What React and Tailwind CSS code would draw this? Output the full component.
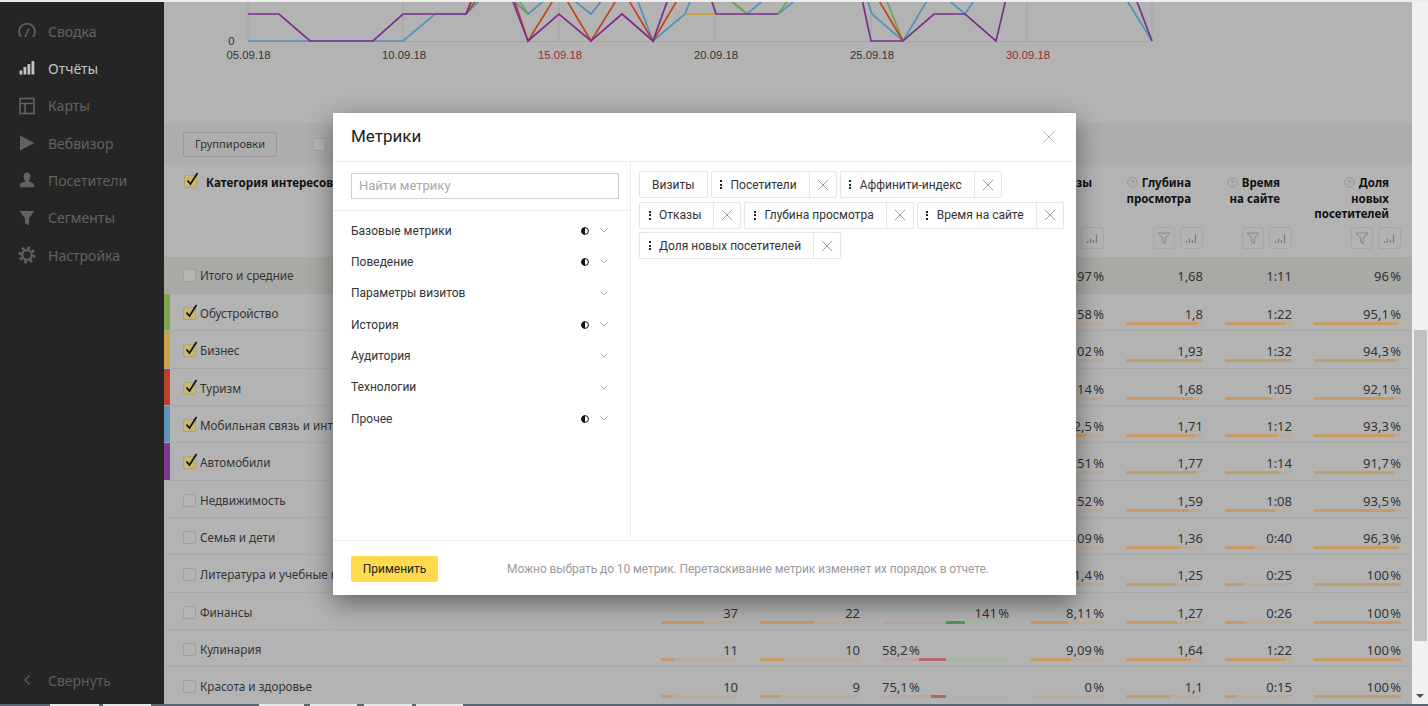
import React from 'react';

const sideItems = [
  { label: 'Сводка', icon: 'gauge' },
  { label: 'Отчёты', icon: 'bars', active: true },
  { label: 'Карты', icon: 'map' },
  { label: 'Вебвизор', icon: 'play' },
  { label: 'Посетители', icon: 'user' },
  { label: 'Сегменты', icon: 'filter' },
  { label: 'Настройка', icon: 'gear' },
];

const SideIcon = ({ name, color }) => (
  <svg width="18" height="18" viewBox="0 0 18 18" fill="none">
    {name === 'gauge' && (
      <g stroke={color} strokeWidth="1.7">
        <path d="M3.2 15A7.9 7.9 0 1 1 14.8 15" />
        <path d="M7 15L11 6.5" />
      </g>
    )}
    {name === 'bars' && (
      <g fill={color}>
        <rect x="1.5" y="11.5" width="2.8" height="4" />
        <rect x="5.5" y="8" width="2.8" height="7.5" />
        <rect x="9.5" y="5" width="2.8" height="10.5" />
        <rect x="13.5" y="2" width="2.8" height="13.5" />
      </g>
    )}
    {name === 'map' && (
      <g stroke={color} strokeWidth="1.6">
        <rect x="2" y="1.5" width="14" height="15" />
        <path d="M2 6.5H16M7 6.5V16.5" />
      </g>
    )}
    {name === 'play' && <path d="M2 1.5L16.5 9L2 16.5Z" fill={color} />}
    {name === 'user' && (
      <path
        d="M9 1.5C6.8 1.5 5.5 3.2 5.5 5.4C5.5 7 6.2 8.6 7.2 9.5V10.6C5 11.4 1.8 12.3 1.8 14.2V16.2H16.2V14.2C16.2 12.3 13 11.4 10.8 10.6V9.5C11.8 8.6 12.5 7 12.5 5.4C12.5 3.2 11.2 1.5 9 1.5Z"
        fill={color}
      />
    )}
    {name === 'filter' && <path d="M1.5 2H16.5L11 9.5V16.5L7 14V9.5Z" fill={color} />}
    {name === 'gear' && (
      <g stroke={color}>
        <circle cx="9" cy="9" r="4.8" strokeWidth="2.2" />
        <circle cx="9" cy="9" r="7.2" strokeWidth="2.6" strokeDasharray="2.83 2.83" />
      </g>
    )}
  </svg>
);

const Sidebar = () => (
  <div className="w-[164px] h-full shrink-0 bg-[#252525] flex flex-col justify-between pt-[10.4px] pb-[5px]">
    <div className="flex flex-col">
      {sideItems.map((item) => (
        <div key={item.label} className="flex items-center h-[37.33px] pl-[18px]">
          <div className="w-[30px]">
            <SideIcon name={item.icon} color={item.active ? '#c4c4c4' : '#626262'} />
          </div>
          <span className={item.active ? 'text-[14px] text-[#c4c4c4]' : 'text-[14px] text-[#626262]'}>
            {item.label}
          </span>
        </div>
      ))}
    </div>
    <div className="flex items-center h-[37.33px] pl-[23px]">
      <div className="w-[25px]">
        <svg width="8" height="12" viewBox="0 0 8 12" fill="none">
          <path d="M6.5 1.5L2 6L6.5 10.5" stroke="#626262" strokeWidth="1.2" />
        </svg>
      </div>
      <span className="text-[14px] text-[#5e5e5e]">Свернуть</span>
    </div>
  </div>
);

const chartLines = [
  {
    color: '#4f93bd',
    parts: [
      '248,41 403,41 435,14 466,14 481,-1',
      '512,-1 528,14 546,-1',
      '572,-1 591,14 603,-1',
      '637,-1 653,41 685,14 691,-1',
      '729,-1 747,14 765,-1',
      '778,14 797,-1',
      '867,-1 872,14 903,41 928,-1',
      '947,-1 965,14 975,-1',
      '1126,-1 1152,41',
    ],
  },
  {
    color: '#6fa34a',
    parts: ['466,14 473,-1', '518,-1 528,14', '729,-1 747,14', '778,14 789,-1', '886,-1 903,41'],
  },
  {
    color: '#c5431f',
    parts: ['466,14 477,-1', '514,-1 528,41 554,-1', '566,-1 591,41 617,-1', '628,-1 653,41 678,-1', '878,-1 903,41'],
  },
  { color: '#cda030', parts: ['685,14 716,14'] },
  {
    color: '#7b2f8b',
    parts: [
      '248,14 279,14 310,41 373,41 403,14 466,14 472,-1',
      '512,-1 528,41 559,14 591,41 622,14 653,41 668,-1',
      '711,-1 716,14 778,14',
      '862,-1 871,41 903,41 934,14 965,14 996,41 1006,-1',
      '1136,-1 1152,41',
    ],
  },
];

const chartGrid = [248, 403, 559, 715, 871, 1027, 1152];

const chartDates = [
  { x: 248.5, label: '05.09.18' },
  { x: 404, label: '10.09.18' },
  { x: 560, label: '15.09.18', weekend: true },
  { x: 716, label: '20.09.18' },
  { x: 872, label: '25.09.18' },
  { x: 1028, label: '30.09.18', weekend: true },
];

const Chart = () => (
  <svg width="1248" height="121" viewBox="164 2 1248 121" className="block shrink-0">
    {chartGrid.map((x) => (
      <line key={x} x1={x} y1="2" x2={x} y2="41" stroke="#a5a5a5" strokeWidth="1" />
    ))}
    <line x1="248" y1="41.5" x2="1152" y2="41.5" stroke="#a5a5a5" strokeWidth="1" />
    {chartLines.map((line) =>
      line.parts.map((points) => (
        <polyline key={line.color + points} points={points} fill="none" stroke={line.color} strokeWidth="1.7" />
      ))
    )}
    <text x="231.5" y="45" textAnchor="middle" fontFamily="'Liberation Sans', sans-serif" fontSize="11.3" fill="#333">
      0
    </text>
    {chartDates.map((d) => (
      <text
        key={d.label}
        x={d.x}
        y="59"
        textAnchor="middle"
        fontFamily="'Liberation Sans', sans-serif"
        fontSize="11.3"
        fill={d.weekend ? '#9c2b2e' : '#333'}
      >
        {d.label}
      </text>
    ))}
  </svg>
);

const Checkbox = ({ checked }) => (
  <div
    className={
      checked
        ? 'relative w-[13px] h-[13px] shrink-0 rounded-[2px] bg-[#c9b874] border border-[#b5a565]'
        : 'relative w-[13px] h-[13px] shrink-0 rounded-[2px] border border-[#a0a0a0] bg-[#b5b5b5]'
    }
  >
    {checked && (
      <svg width="15" height="16" viewBox="0 0 15 16" fill="none" className="absolute left-0 top-[-5px]">
        <path d="M2.5 9.5L5.5 13L12.5 2" stroke="#111" strokeWidth="1.7" />
      </svg>
    )}
  </div>
);

const colWidths = ['w-[99px]', 'w-[122px]', 'w-[149px]', 'w-[95px]', 'w-[99px]', 'w-[89px]', 'w-[109px]'];

const HelpIcon = () => (
  <svg width="11" height="11" viewBox="0 0 11 11" className="inline-block align-[-1px] mr-[4px]">
    <circle cx="5.5" cy="5.5" r="4.8" fill="none" stroke="#8e8e8e" strokeWidth="0.9" />
    <text x="5.5" y="8" textAnchor="middle" fontSize="7" fill="#8e8e8e" fontFamily="'Liberation Sans', sans-serif">
      ?
    </text>
  </svg>
);

const FilterBtn = () => (
  <div className="w-[22px] h-[22px] border border-[#a6a6a6] rounded-[3px] flex items-center justify-center">
    <svg width="14" height="14" viewBox="0 0 14 14" fill="none">
      <path d="M1 2H13L8.3 7.2V12.5L5.7 11V7.2Z" stroke="#878787" strokeWidth="1" />
    </svg>
  </div>
);

const ChartBtn = () => (
  <div className="w-[23px] h-[22px] border border-[#a6a6a6] rounded-[3px] flex items-center justify-center">
    <svg width="13" height="11" viewBox="0 0 13 11" fill="none">
      <path d="M1.5 10V8M4.5 10V5.5M7.5 10V7M10.5 10V1.5" stroke="#7c7c7c" strokeWidth="1.3" />
    </svg>
  </div>
);

const metricHeads = [
  { lines: [], empty: true },
  { lines: [], empty: true },
  { lines: [], empty: true },
  { lines: ['Отказы'], chartOnly: true },
  { lines: ['Глубина', 'просмотра'] },
  { lines: ['Время', 'на сайте'] },
  { lines: ['Доля', 'новых', 'посетителей'] },
];

const HeaderRow = () => (
  <div className="flex h-[92px] shrink-0">
    <div className="flex-1 flex items-start pl-[20px] pt-[10px]">
      <Checkbox checked />
      <span className="ml-[9px] text-[11.6px] leading-[15px] font-bold text-[#111] whitespace-nowrap">
        Категория интересов
      </span>
    </div>
    {metricHeads.map((head, i) => (
      <div key={i} className={`${colWidths[i]} flex flex-col justify-between pt-[10px] pb-[8px] pr-[11px]`}>
        <div className="pr-[12px] text-right text-[11.5px] leading-[15.5px] font-bold text-[#111]">
          {head.lines.map((line, k) => (
            <div key={line}>
              {k === 0 && !head.chartOnly && <HelpIcon />}
              {line}
            </div>
          ))}
        </div>
        {!head.empty && (
          <div className="flex justify-end gap-[5px]">
            {!head.chartOnly && <FilterBtn />}
            <ChartBtn />
          </div>
        )}
      </div>
    ))}
  </div>
);

const toSec = (t) => {
  const [m, s] = t.split(':');
  return Number(m) * 60 + Number(s);
};

const pct = (s) => parseFloat(s.replace(',', '.'));

const rows = [
  { name: 'Обустройство', stripe: 'bg-[#7aa650]', checked: true, bounce: '8,58\u200a%', bounceBar: 20, depth: '1,8', time: '1:22', fresh: '95,1\u200a%' },
  { name: 'Бизнес', stripe: 'bg-[#c4a648]', checked: true, bounce: '9,02\u200a%', bounceBar: 30, depth: '1,93', time: '1:32', fresh: '94,3\u200a%' },
  { name: 'Туризм', stripe: 'bg-[#bb412c]', checked: true, bounce: '9,14\u200a%', bounceBar: 30, depth: '1,68', time: '1:05', fresh: '92,1\u200a%' },
  { name: 'Мобильная связь и интернет', stripe: 'bg-[#5e93b8]', checked: true, bounce: '12,5\u200a%', bounceBar: 75, depth: '1,71', time: '1:12', fresh: '93,3\u200a%' },
  { name: 'Автомобили', stripe: 'bg-[#7b3b8c]', checked: true, bounce: '7,51\u200a%', bounceBar: 30, depth: '1,77', time: '1:14', fresh: '91,7\u200a%' },
  { name: 'Недвижимость', bounce: '7,52\u200a%', bounceBar: 30, depth: '1,59', time: '1:08', fresh: '93,5\u200a%' },
  { name: 'Семья и дети', bounce: '9,09\u200a%', bounceBar: 30, depth: '1,36', time: '0:40', fresh: '96,3\u200a%' },
  { name: 'Литература и учебные материалы', bounce: '11,4\u200a%', bounceBar: 67, depth: '1,25', time: '0:25', fresh: '100\u200a%' },
  {
    name: 'Финансы', visits: '37', visitsBar: 56, users: '22', usersBar: 54, affinity: '141\u200a%', gain: 19,
    bounce: '8,11\u200a%', bounceBar: 50, depth: '1,27', time: '0:26', fresh: '100\u200a%',
  },
  {
    name: 'Кулинария', visits: '11', visitsBar: 17, users: '10', usersBar: 24, affinity: '58,2\u200a%', loss: 27,
    bounce: '9,09\u200a%', bounceBar: 55, depth: '1,64', time: '1:22', fresh: '100\u200a%',
  },
  {
    name: 'Красота и здоровье', visits: '10', visitsBar: 16, users: '9', usersBar: 21, affinity: '75,1\u200a%', loss: 15,
    bounce: '0\u200a%', bounceBar: 0, depth: '1,1', time: '0:15', fresh: '100\u200a%',
  },
];

const Bar = ({ value }) => (
  <div className="h-[3px] bg-[#bcaa9a]">
    <div className="h-full bg-[#c89a66]" style={{ width: `${value}%` }} />
  </div>
);

const AffinityBar = ({ gain, loss }) => (
  <div className="h-[3px] flex">
    <div className="w-1/2 h-full flex justify-end bg-[#b9a7a3]">
      {loss && <div className="h-full bg-[#b96565]" style={{ width: `${(loss / 63.5) * 100}%` }} />}
    </div>
    <div className="w-1/2 h-full bg-[#a9b6a6]">
      {gain && <div className="h-full bg-[#4f9a52]" style={{ width: `${(gain / 63.5) * 100}%` }} />}
    </div>
  </div>
);

const ValueCell = ({ width, value, bar }) => (
  <div className={`${width} px-[11px] pt-[12px]`}>
    <div className="h-[16px] text-right text-[13px] leading-[16px] text-[#333]">{value}</div>
    {bar !== undefined && <Bar value={bar} />}
  </div>
);

const DataRow = ({ row }) => (
  <div className="flex h-[37.33px] shrink-0 border-b border-[#a9a9a9]">
    <div className="flex-1 flex items-stretch">
      <div className={`w-[6px] ${row.stripe || ''}`} />
      <div className="flex items-center ml-[13px] pt-[3px]">
        <Checkbox checked={row.checked} />
        {/* the modal covers everything right of x=333, so the label stops there */}
        <span className="ml-[4px] w-[133px] overflow-hidden text-[11.7px] text-[#333] whitespace-nowrap">{row.name}</span>
      </div>
    </div>
    <ValueCell width={colWidths[0]} value={row.visits} bar={row.visits ? row.visitsBar : undefined} />
    <ValueCell width={colWidths[1]} value={row.users} bar={row.users ? row.usersBar : undefined} />
    <div className={`${colWidths[2]} px-[11px] pt-[12px]`}>
      <div className={row.gain ? 'h-[16px] text-right text-[13px] leading-[16px] text-[#333]' : 'h-[16px] text-left text-[13px] leading-[16px] text-[#333]'}>
        {row.affinity}
      </div>
      {row.affinity && <AffinityBar gain={row.gain} loss={row.loss} />}
    </div>
    <ValueCell width={colWidths[3]} value={row.bounce} bar={row.bounceBar} />
    <ValueCell width={colWidths[4]} value={row.depth} bar={(pct(row.depth) / 1.93) * 100} />
    <ValueCell width={colWidths[5]} value={row.time} bar={(toSec(row.time) / 92) * 100} />
    <ValueCell width={colWidths[6]} value={row.fresh} bar={pct(row.fresh)} />
  </div>
);

const TotalRow = () => (
  <div className="flex h-[37px] shrink-0 bg-[#a9a9a6]">
    <div className="flex-1 flex items-center pl-[19px]">
      <Checkbox />
      <span className="ml-[4px] text-[11.7px] text-[#333]">Итого и средние</span>
    </div>
    {['', '', '', '8,97\u200a%', '1,68', '1:11', '96\u200a%'].map((v, i) => (
      <div key={i} className={`${colWidths[i]} px-[11px] pt-[11px] text-right text-[13px] leading-[16px] text-[#333]`}>
        {v}
      </div>
    ))}
  </div>
);

const metricGroups = [
  { name: 'Базовые метрики', partial: true },
  { name: 'Поведение', partial: true },
  { name: 'Параметры визитов' },
  { name: 'История', partial: true },
  { name: 'Аудитория' },
  { name: 'Технологии' },
  { name: 'Прочее', partial: true },
];

const chips = ['Посетители', 'Аффинити-индекс', 'Отказы', 'Глубина просмотра', 'Время на сайте', 'Доля новых посетителей'];

const Cross = ({ size, color }) => (
  <svg width={size} height={size} viewBox="0 0 14 14" fill="none">
    <path d="M1 1L13 13M13 1L1 13" stroke={color} strokeWidth={14 / size} />
  </svg>
);

const Chip = ({ label }) => (
  <div className="flex items-center h-[27px] border border-[#e6e6e6] rounded-[2px] text-[#333]">
    <div className="w-[19px] h-full flex flex-col items-center justify-center gap-[1.5px]">
      <i className="block w-[2px] h-[2px] bg-[#222]" />
      <i className="block w-[2px] h-[2px] bg-[#222]" />
      <i className="block w-[2px] h-[2px] bg-[#222]" />
    </div>
    <span className="pr-[12px] whitespace-nowrap">{label}</span>
    <div className="w-[27px] h-full flex items-center justify-center border-l border-[#e6e6e6]">
      <Cross size={12} color="#9d9d9d" />
    </div>
  </div>
);

const MetricsModal = () => (
  <div className="absolute left-[333px] top-[113px] w-[743px] h-[482px] bg-white flex flex-col shadow-[0_8px_24px_rgba(0,0,0,0.45)] font-['Roboto',sans-serif] text-[12px]">
    <div className="h-[49px] shrink-0 border-b border-[#ededed] flex items-center justify-between pl-[18px] pr-[20px] pb-[1px]">
      <span className="text-[17px] text-[#222]">Метрики</span>
      <Cross size={14} color="#b8b8b8" />
    </div>
    <div className="flex-1 flex min-h-0">
      <div className="w-[298px] h-[375px] shrink-0 border-r border-[#ededed]">
        <div className="h-[49px] border-b border-[#ededed] pl-[18px] pr-[11px] pt-[11px]">
          <div className="h-[26px] border border-[#cfcfcf] pl-[7px] flex items-center text-[13px] text-[#a8a8a8]">Найти метрику</div>
        </div>
        <div className="pt-[4px] pl-[18px] pr-[22px]">
          {metricGroups.map((g) => (
            <div key={g.name} className="flex items-center h-[31.33px] text-[#333]">
              <span className="flex-1">{g.name}</span>
              {g.partial && (
                <svg width="8" height="8" viewBox="0 0 8 8" className="mr-[11px]">
                  <circle cx="4" cy="4" r="3.4" fill="#fff" stroke="#111" />
                  <path d="M4 0.5A3.5 3.5 0 0 0 4 7.5Z" fill="#111" />
                </svg>
              )}
              <svg width="8" height="5" viewBox="0 0 8 5" fill="none">
                <path d="M0.5 0.5L4 4L7.5 0.5" stroke="#adadad" />
              </svg>
            </div>
          ))}
        </div>
      </div>
      <div className="flex-1 flex flex-wrap content-start gap-x-[3px] gap-y-[3.5px] pl-[8px] pr-[4px] pt-[9px]">
        <div className="flex items-center h-[27px] px-[12px] border border-[#e6e6e6] rounded-[2px] text-[#333]">Визиты</div>
        {chips.map((label) => (
          <Chip key={label} label={label} />
        ))}
      </div>
    </div>
    <div className="h-[55px] shrink-0 border-t border-[#ededed] flex items-center pl-[18px] pt-[2px]">
      <div className="w-[87px] h-[26px] bg-[#ffdb4d] rounded-[2px] flex items-center justify-center text-[#222]">Применить</div>
      <span className="ml-[69px] tracking-[-0.09px] text-[#9a9a9a]">Можно выбрать до 10 метрик. Перетаскивание метрик изменяет их порядок в отчете.</span>
    </div>
  </div>
);

const bottomThumbs = ['w-[49px] ml-[50px]', 'w-[48px] ml-[4px]', 'w-[45px] ml-[108px]', 'w-[47px] ml-[6px]', 'w-[48px] ml-[7px]', 'w-[47px] ml-[4px]'];

const App = () => (
  <div className="relative w-[1428px] h-[706px] overflow-hidden flex flex-col bg-[#b3b3b3] font-['Noto_Sans',sans-serif]">
    <div className="h-[2px] shrink-0 bg-[#ececec]" />
    <div className="flex h-[702px] shrink-0">
      <Sidebar />
      <div className="w-[1248px] h-full flex flex-col overflow-hidden">
        <Chart />
        <div className="h-[42px] shrink-0 bg-[#adadad] flex items-center pl-[19px]">
          <div className="w-[94px] h-[25px] border border-[#989898] rounded-[2px] flex items-center justify-center text-[11.1px] text-[#333]">
            Группировки
          </div>
          <div className="ml-[36px]">
            <Checkbox />
          </div>
        </div>
        <HeaderRow />
        <TotalRow />
        {rows.map((row) => (
          <DataRow key={row.name} row={row} />
        ))}
      </div>
      <div className="w-[16px] h-full bg-[#f1f1f1] flex flex-col items-center">
        <div className="w-[13px] h-[311px] mt-[328px] bg-[#c1c1c1]" />
        <div className="mt-auto mb-[6px] w-0 h-0 border-x-[4px] border-x-transparent border-t-[4px] border-t-[#505050]" />
      </div>
    </div>
    <div className="h-[2px] shrink-0 bg-[#5a6670] flex">
      {bottomThumbs.map((cls) => (
        <div key={cls} className={`${cls} h-full bg-[#e8e8e8]`} />
      ))}
    </div>
    <MetricsModal />
  </div>
);

export default App;
